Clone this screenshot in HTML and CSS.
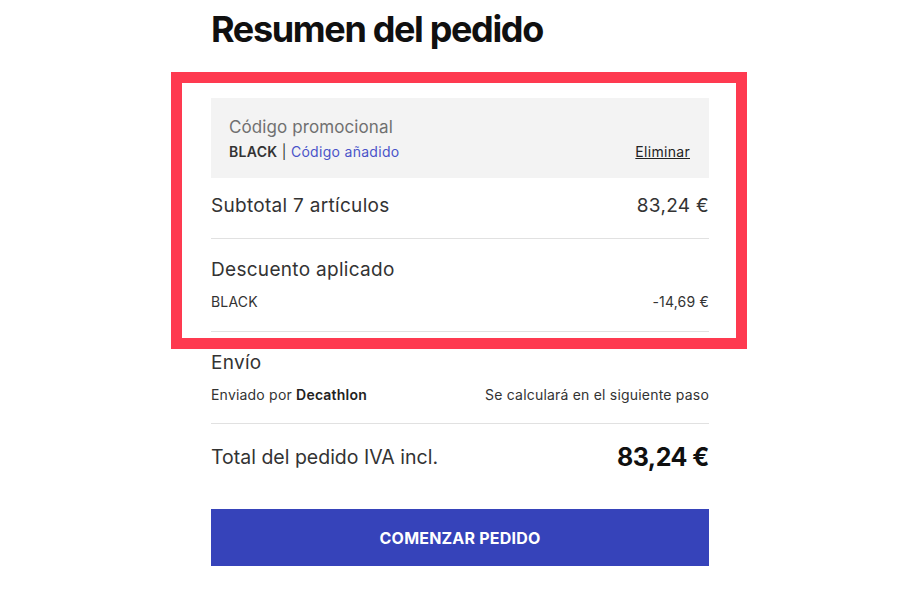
FILE: index.html
```html
<!DOCTYPE html>
<html lang="es">
<head>
    <meta charset="UTF-8">
    <meta name="viewport" content="width=device-width, initial-scale=1.0">
    <title>Resumen del pedido</title>
    <link rel="stylesheet" href="styles.css">
</head>
<body>

    <div class="summary">
        <h1 class="summary-title">Resumen del pedido</h1>

        <div class="promo">
            <p class="promo-label">Código promocional</p>
            <div class="promo-line">
                <span><b>BLACK</b> | <span class="promo-added">Código añadido</span></span>
                <a href="#" class="promo-remove">Eliminar</a>
            </div>
        </div>

        <div class="block block-first">
            <div class="row row-main">
                <span>Subtotal 7 artículos</span>
                <span>83,24 €</span>
            </div>
        </div>

        <div class="block">
            <p class="block-title">Descuento aplicado</p>
            <div class="row row-small">
                <span>BLACK</span>
                <span>-14,69 €</span>
            </div>
        </div>

        <div class="block block-last">
            <p class="block-title">Envío</p>
            <div class="row row-small">
                <span>Enviado por <b>Decathlon</b></span>
                <span>Se calculará en el siguiente paso</span>
            </div>
        </div>

        <div class="row row-total">
            <span>Total del pedido IVA incl.</span>
            <span class="total-price">83,24 €</span>
        </div>

        <button class="checkout-btn">COMENZAR PEDIDO</button>

        <!-- highlight frame drawn over the promo / discount part -->
        <div class="highlight"></div>
    </div>

</body>
</html>
```

FILE: styles.css
```css
/* General Page Styling */
body {
    margin: 0;
    padding: 0;
    background: #ffffff;
    font-family: Inter, Roboto, sans-serif;
    color: #333333;
}

h1, p {
    margin: 0;
}

/* Summary Column */
.summary {
    position: relative;
    width: 498px;
    margin-left: 211px;
    padding-top: 7px;
}

.summary-title {
    font-size: 36px;
    line-height: 44px;
    font-weight: 700;
    letter-spacing: -1.35px;
    color: #101010;
}

/* Promo Code Box */
.promo {
    margin-top: 47px;
    height: 80px;
    box-sizing: border-box;
    padding: 17px 19px 0 18px;
    background: #f3f3f3;
}

.promo-label {
    font-size: 17px;
    line-height: 24px;
    letter-spacing: 0.1px;
    color: #707070;
}

.promo-line {
    display: flex;
    justify-content: space-between;
    align-items: center;
    font-size: 14px;
    line-height: 20px;
    letter-spacing: 0.3px;
    margin-top: 3px;
    color: #333333;
}

.promo-line b { font-weight: 600; }

.promo-added { color: #4a53c9; }

.promo-remove {
    color: #222222;
    text-decoration: underline;
}

/* Rows */
.block {
    border-bottom: 1px solid #e1e1e1;
    padding: 19px 0 19px;
}

.block-first { padding: 16px 0 20px; }
.block-last { padding-bottom: 18px; }

.block-title {
    font-size: 19px;
    line-height: 24px;
    letter-spacing: 0.3px;
    color: #333333;
}

.row {
    display: flex;
    justify-content: space-between;
    align-items: center;
}

.row-main {
    font-size: 19px;
    line-height: 24px;
    letter-spacing: 0.3px;
}

.row-small {
    margin-top: 10px;
    font-size: 14px;
    line-height: 20px;
    letter-spacing: 0.2px;
    color: #333333;
}

.row-small b { font-weight: 600; color: #222222; }

.row-total {
    padding-top: 17px;
    font-size: 19.5px;
    line-height: 32px;
    color: #333333;
}

.total-price {
    font-size: 25px;
    font-weight: 700;
    color: #101010;
    letter-spacing: -0.5px;
}

/* Checkout Button */
.checkout-btn {
    display: block;
    width: 100%;
    height: 57px;
    margin-top: 36px;
    border: none;
    background: #3643ba;
    color: #ffffff;
    font-family: Inter, Roboto, sans-serif;
    font-size: 16px;
    font-weight: 700;
    letter-spacing: 0.2px;
    cursor: pointer;
}

/* Annotation Frame */
.highlight {
    position: absolute;
    top: 72px;
    left: -40px;
    width: 554px;
    height: 255px;
    border: 11px solid #fe3a50;
    pointer-events: none;
}
```
